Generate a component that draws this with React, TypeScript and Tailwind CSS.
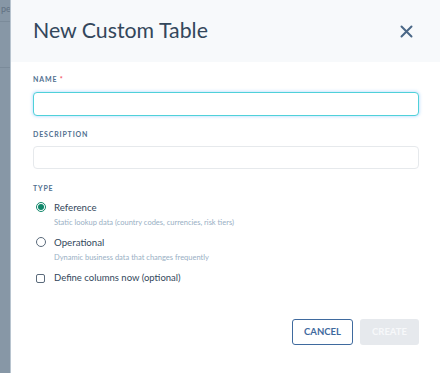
import React from "react";

export default function App() {
  return (
    <div
      className="flex h-[373px] w-[440px] overflow-hidden bg-white"
      style={{ fontFamily: "Lato, 'Open Sans', sans-serif" }}
    >
      {/* backdrop strip */}
      <div className="flex w-[10px] shrink-0 flex-col bg-[#8797a6]">
        <div className="h-[22px] border-b border-[#7b8b9a] pt-[3px] pl-[1px] text-[9px] leading-[12px] text-[#5f7082]">
          pe
        </div>
        <div className="h-[46px] border-b border-[#7b8b9a]" />
        <div className="flex-1" />
      </div>

      {/* modal */}
      <div className="flex flex-1 flex-col border-l border-[#b8c4cf] bg-white">
        <div className="flex h-[62px] shrink-0 items-center justify-between bg-[#f7f9fb] pl-[22px] pr-[27px]">
          <h1 className="text-[21.3px] font-normal leading-none text-[#33475b]">New Custom Table</h1>
          <svg width="13" height="13" viewBox="0 0 13 13" className="mt-[1px]">
            <path d="M1.5 1.5 L11.5 11.5 M11.5 1.5 L1.5 11.5" stroke="#4a6786" strokeWidth="2" strokeLinecap="round" />
          </svg>
        </div>

        <div className="flex flex-1 flex-col pl-[22px] pr-[21px]">
          <div className="mt-[13px] text-[7px] font-bold uppercase leading-[8px] tracking-[0.12em] text-[#516f90]">
            Name <span className="text-[#f2545b]">*</span>
          </div>
          <div className="mt-[9px] h-[24px] rounded-[4px] border-[1.5px] border-[#4fd1d9] bg-white shadow-[0_0_3px_1px_rgba(105,180,255,0.35)]" />

          <div className="mt-[14px] text-[7px] font-bold uppercase leading-[8px] tracking-[0.12em] text-[#516f90]">
            Description
          </div>
          <div className="mt-[8px] h-[23px] rounded-[4px] border border-[#e6e9ec] bg-white" />

          <div className="mt-[15px] text-[7px] font-bold uppercase leading-[8px] tracking-[0.12em] text-[#516f90]">
            Type
          </div>

          <div className="mt-[9px] flex items-center">
            <span className="ml-[3px] flex h-[10px] w-[10px] items-center justify-center rounded-full border border-[#10876a] bg-white">
              <span className="h-[6px] w-[6px] rounded-full bg-[#10876a]" />
            </span>
            <span className="ml-[8px] text-[9.7px] leading-[12px] text-[#33475b]">Reference</span>
          </div>
          <div className="ml-[21px] mt-[5px] text-[7.5px] leading-[10px] text-[#99afc4]">
            Static lookup data (country codes, currencies, risk tiers)
          </div>

          <div className="mt-[8px] flex items-center">
            <span className="ml-[3px] h-[10px] w-[10px] rounded-full border border-[#5a6a7b] bg-white" />
            <span className="ml-[8px] text-[9.7px] leading-[12px] text-[#33475b]">Operational</span>
          </div>
          <div className="ml-[21px] mt-[5px] text-[7.5px] leading-[10px] text-[#99afc4]">
            Dynamic business data that changes frequently
          </div>

          <div className="mt-[9px] flex items-center">
            <span className="ml-[3px] h-[9px] w-[9px] rounded-[2px] border border-[#5a6a7b] bg-white" />
            <span className="ml-[9px] text-[9.5px] leading-[12px] text-[#33475b]">Define columns now (optional)</span>
          </div>

          <div className="mt-[35px] flex justify-end gap-[7px]">
            <button className="flex h-[26px] w-[61px] items-center justify-center rounded-[3px] border border-[#3f6a9e] bg-white text-[9.5px] font-bold leading-none text-[#3f6a9e]">
              CANCEL
            </button>
            <button className="flex h-[26px] w-[59px] items-center justify-center rounded-[3px] bg-[#e6e9ed] text-[9.5px] font-bold leading-none text-[#f7f8fa]">
              CREATE
            </button>
          </div>
        </div>
      </div>
    </div>
  );
}
